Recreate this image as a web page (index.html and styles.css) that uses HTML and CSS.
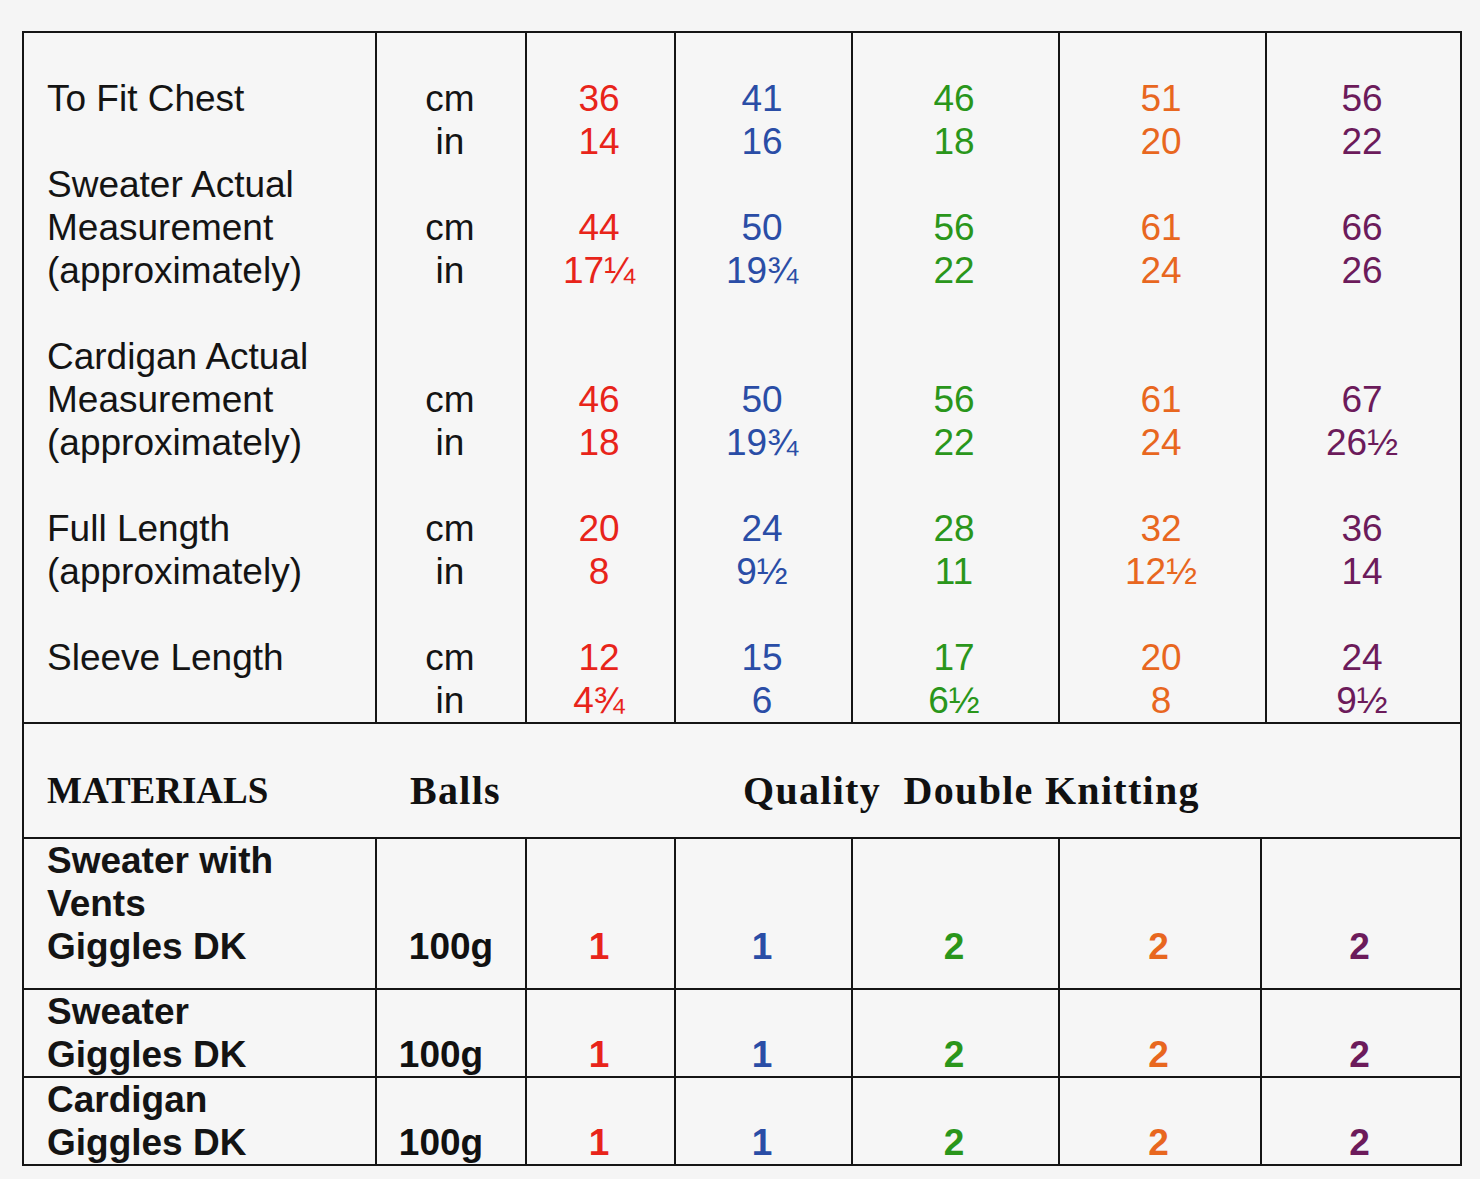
FILE: index.html
```html
<!DOCTYPE html>
<html lang="en">
<head>
<meta charset="utf-8">
<title>Size chart</title>
<link rel="stylesheet" href="styles.css">
</head>
<body>
<div class="chart">
  <div class="measure">
    <div class="row first">
      <div class="cell label">To Fit Chest</div>
      <div class="cell unit">cm<br>in</div>
      <div class="cell val c1">36<br>14</div>
      <div class="cell val c2">41<br>16</div>
      <div class="cell val c3">46<br>18</div>
      <div class="cell val c4">51<br>20</div>
      <div class="cell val c5">56<br>22</div>
    </div>
    <div class="row gap">
      <div class="cell label">Sweater Actual<br>Measurement<br>(approximately)</div>
      <div class="cell unit">cm<br>in</div>
      <div class="cell val c1">44<br>17¼</div>
      <div class="cell val c2">50<br>19¾</div>
      <div class="cell val c3">56<br>22</div>
      <div class="cell val c4">61<br>24</div>
      <div class="cell val c5">66<br>26</div>
    </div>
    <div class="row gap">
      <div class="cell label">Cardigan Actual<br>Measurement<br>(approximately)</div>
      <div class="cell unit">cm<br>in</div>
      <div class="cell val c1">46<br>18</div>
      <div class="cell val c2">50<br>19¾</div>
      <div class="cell val c3">56<br>22</div>
      <div class="cell val c4">61<br>24</div>
      <div class="cell val c5">67<br>26½</div>
    </div>
    <div class="row gap">
      <div class="cell label">Full Length<br>(approximately)</div>
      <div class="cell unit">cm<br>in</div>
      <div class="cell val c1">20<br>8</div>
      <div class="cell val c2">24<br>9½</div>
      <div class="cell val c3">28<br>11</div>
      <div class="cell val c4">32<br>12½</div>
      <div class="cell val c5">36<br>14</div>
    </div>
    <div class="row">
      <div class="cell label">Sleeve Length</div>
      <div class="cell unit">cm<br>in</div>
      <div class="cell val c1">12<br>4¾</div>
      <div class="cell val c2">15<br>6</div>
      <div class="cell val c3">17<br>6½</div>
      <div class="cell val c4">20<br>8</div>
      <div class="cell val c5">24<br>9½</div>
    </div>
  </div>

  <div class="mat-head">
    <div class="mh-title">MATERIALS</div>
    <div class="mh-balls">Balls</div>
    <div class="mh-quality">Quality&nbsp; Double Knitting</div>
  </div>

  <div class="materials">
    <div class="mrow tall">
      <div class="mcell mlabel">Sweater with<br>Vents<br>Giggles DK</div>
      <div class="mcell mweight w1">100g</div>
      <div class="mcell mval c1">1</div>
      <div class="mcell mval c2">1</div>
      <div class="mcell mval c3">2</div>
      <div class="mcell mval c4">2</div>
      <div class="mcell mval c5">2</div>
    </div>
    <div class="mrow">
      <div class="mcell mlabel">Sweater<br>Giggles DK</div>
      <div class="mcell mweight">100g</div>
      <div class="mcell mval c1">1</div>
      <div class="mcell mval c2">1</div>
      <div class="mcell mval c3">2</div>
      <div class="mcell mval c4">2</div>
      <div class="mcell mval c5">2</div>
    </div>
    <div class="mrow last">
      <div class="mcell mlabel">Cardigan<br>Giggles DK</div>
      <div class="mcell mweight">100g</div>
      <div class="mcell mval c1">1</div>
      <div class="mcell mval c2">1</div>
      <div class="mcell mval c3">2</div>
      <div class="mcell mval c4">2</div>
      <div class="mcell mval c5">2</div>
    </div>
  </div>
</div>
</body>
</html>
```

FILE: styles.css
```css
html, body {
  margin: 0;
  padding: 0;
  background: #f5f5f5;
}

body {
  font-family: "Liberation Sans", Arial, sans-serif;
  color: #141414;
}

.chart {
  box-sizing: border-box;
  margin: 31px 0 0 22px;
  width: 1440px;
  border: 2px solid #151515;
  background: #f6f6f6;
}

/* ---------- measurements ---------- */
.measure {
  display: grid;
  grid-template-columns: 351px 150px 149px 177px 207px 207px 195px;
  border-bottom: 2px solid #151515;
  font-size: 37px;
  line-height: 43px;
}

.row {
  display: contents;
}

.cell {
  display: flex;
  flex-direction: column;
  justify-content: flex-end;
  text-align: center;
  border-left: 2px solid #151515;
  padding-right: 3px;
}

.row.first .cell {
  padding-top: 44px;
}

.row.gap .cell {
  padding-bottom: 43px;
}

.cell.label {
  border-left: none;
  justify-content: flex-start;
  text-align: left;
  padding-left: 23px;
  padding-right: 0;
}

.cell.unit {
  padding-right: 2px;
}

.c1 { color: #e8241a; }
.c2 { color: #2a4da6; }
.c3 { color: #2a961b; }
.c4 { color: #e8671f; }
.c5 { color: #6c1b5b; }

/* ---------- materials header ---------- */
.mat-head {
  display: flex;
  align-items: center;
  box-sizing: border-box;
  height: 115px;
  padding-top: 20px;
  border-bottom: 2px solid #151515;
  font-family: "Liberation Serif", "Times New Roman", serif;
  font-weight: bold;
  font-size: 37px;
  color: #111;
}

.mh-title {
  width: 363px;
  padding-left: 23px;
}

.mh-balls {
  width: 333px;
  font-size: 40px;
  letter-spacing: 1.3px;
}

.mh-quality {
  font-size: 40px;
  letter-spacing: 1.3px;
}

/* ---------- materials rows ---------- */
.materials {
  display: grid;
  grid-template-columns: 351px 150px 149px 177px 207px 202px 200px;
  font-weight: bold;
  font-size: 37px;
  line-height: 43px;
}

.mrow {
  display: contents;
}

.mcell {
  display: flex;
  flex-direction: column;
  justify-content: flex-end;
  box-sizing: border-box;
  height: 88px;
  text-align: center;
  border-left: 2px solid #151515;
  border-bottom: 2px solid #151515;
  padding-right: 3px;
}

.mrow.tall .mcell {
  height: 151px;
  padding-bottom: 20px;
}

.mrow.last .mcell {
  border-bottom: none;
  height: 86px;
}

.mcell.mlabel {
  border-left: none;
  justify-content: flex-start;
  text-align: left;
  padding-left: 23px;
  padding-right: 0;
}

.mweight {
  color: #111;
  padding-right: 20px;
}

.mweight.w1 {
  padding-right: 0;
}
```
